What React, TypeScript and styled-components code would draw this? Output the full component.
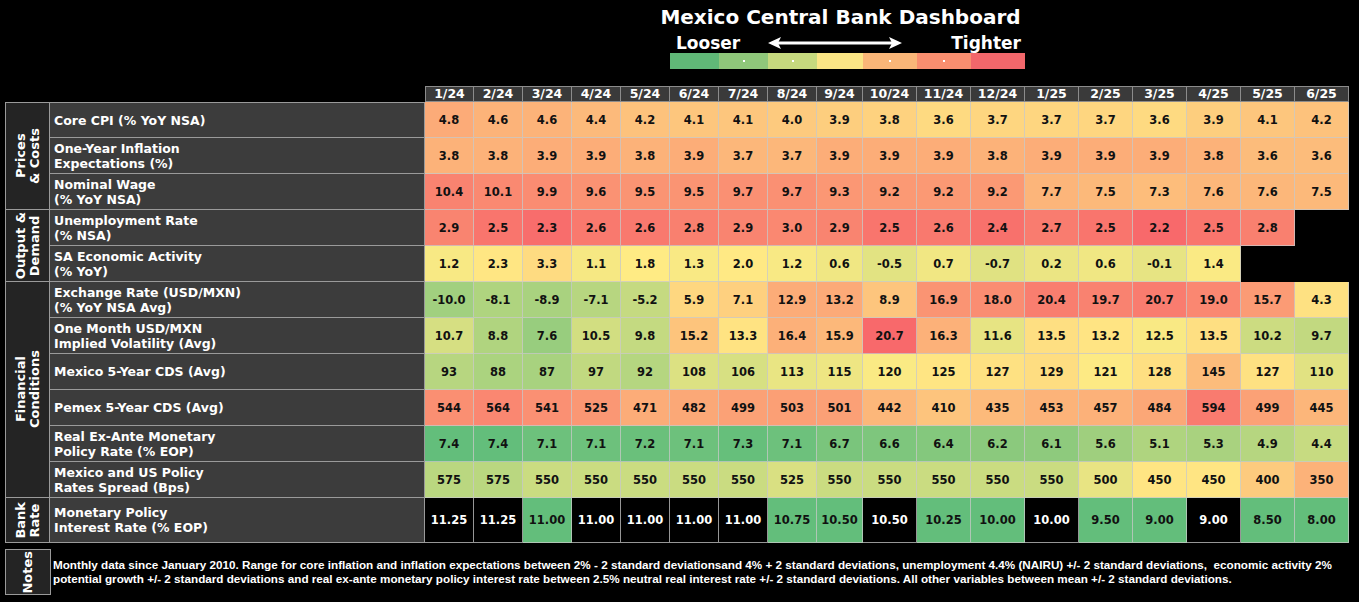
import React from 'react';
import styled, { createGlobalStyle } from 'styled-components';

const GlobalStyle = createGlobalStyle`
  html, body {
    margin: 0;
    padding: 0;
    background: #000;
  }
  body {
    font-family: 'DejaVu Sans', Verdana, sans-serif;
    color: #fff;
  }
`;

const Page = styled.div`
  width: 1359px;
  height: 602px;
  background: #000;
  overflow: hidden;
  display: flex;
  flex-direction: column;
`;

const Header = styled.header`
  margin-left: 660px;
  width: 365px;
  padding-top: 5px;
  display: flex;
  flex-direction: column;
`;

const Title = styled.h1`
  margin: 0;
  padding-right: 4px;
  font-size: 20px;
  line-height: 24px;
  font-weight: bold;
  text-align: center;
  color: #fff;
  white-space: nowrap;
`;

const ScaleRow = styled.div`
  margin-left: 10px;
  height: 24px;
  display: grid;
  grid-template-columns: 6px 92px 134px 1fr;
  align-items: end;
`;

const ScaleWord = styled.span<{ $right?: boolean }>`
  font-size: 17px;
  font-weight: bold;
  line-height: 20px;
  white-space: nowrap;
  grid-column: ${p => (p.$right ? 4 : 2)};
  text-align: ${p => (p.$right ? 'right' : 'left')};
  padding-right: ${p => (p.$right ? '4px' : '0')};
`;

const ArrowBox = styled.div`
  height: 20px;
  display: flex;
  align-items: center;
`;

const Legend = styled.div`
  margin-left: 10px;
  height: 16px;
  display: flex;
`;

const Swatch = styled.div<{ $w: number; $c: string; $dot?: boolean }>`
  width: ${p => p.$w}px;
  background: ${p => p.$c};
  display: flex;
  align-items: center;
  justify-content: center;
  &::after {
    content: '';
    width: 2px;
    height: 2px;
    background: ${p => (p.$dot ? '#fff' : 'transparent')};
  }
`;

const Table = styled.div`
  margin: 17px 0 0 5px;
  display: grid;
  grid-template-columns: 45px 375px repeat(8, 49px) 46px repeat(9, 54px);
  grid-template-rows: 16px repeat(11, 36px) 45px;
`;

const Corner = styled.div`
  grid-column: span 2;
`;

const HeadCell = styled.div<{ $first?: boolean }>`
  box-sizing: border-box;
  background: #3a3a3a;
  border: 1px solid #8c8c8c;
  border-left: ${p => (p.$first ? '1px solid #8c8c8c' : 'none')};
  display: flex;
  align-items: center;
  justify-content: center;
  font-size: 12.5px;
  font-weight: bold;
  line-height: 1;
`;

const GroupCell = styled.div<{ $span: number; $top?: boolean }>`
  grid-row: span ${p => p.$span};
  box-sizing: border-box;
  background: #242424;
  border: 1px solid #9a9a9a;
  border-top: ${p => (p.$top ? '1px solid #9a9a9a' : 'none')};
  display: flex;
  align-items: center;
  justify-content: center;
`;

const GroupText = styled.div`
  writing-mode: vertical-rl;
  transform: rotate(180deg);
  text-align: center;
  font-size: 13px;
  line-height: 14px;
  font-weight: bold;
  white-space: nowrap;
`;

const LabelCell = styled.div<{ $top?: boolean }>`
  box-sizing: border-box;
  background: #3c3c3c;
  border-right: 1px solid #9a9a9a;
  border-bottom: 1px solid #9a9a9a;
  border-top: ${p => (p.$top ? '1px solid #9a9a9a' : 'none')};
  padding-left: 4px;
  display: flex;
  flex-direction: column;
  justify-content: center;
  font-size: 12.5px;
  line-height: 15px;
  font-weight: bold;
  white-space: nowrap;
`;

const ValueCell = styled.div<{ $bg: string; $light?: boolean }>`
  box-sizing: border-box;
  background: ${p => p.$bg};
  border-right: 1px solid rgba(200, 200, 200, 0.75);
  border-bottom: 1px solid rgba(200, 200, 200, 0.75);
  display: flex;
  align-items: center;
  justify-content: center;
  font-size: 11.5px;
  font-weight: bold;
  color: ${p => (p.$light ? '#fff' : '#111')};
`;

const BlankCell = styled.div`
  background: #000;
`;

const Notes = styled.div`
  margin: 6px 0 0 5px;
  display: flex;
  align-items: center;
`;

const NotesTag = styled.div`
  box-sizing: border-box;
  width: 46px;
  height: 46px;
  flex: none;
  background: #242424;
  border: 1px solid #9a9a9a;
  display: flex;
  align-items: center;
  justify-content: center;
`;

const NotesText = styled.p`
  margin: 0 0 0 2px;
  font-family: 'Liberation Sans', Arial, sans-serif;
  font-size: 11.7px;
  line-height: 14px;
  font-weight: bold;
  white-space: nowrap;
`;

const GREEN = [99, 190, 123];
const YELLOW = [255, 235, 132];
const RED = [248, 105, 107];

function scaleColor(t: number) {
  const c = Math.max(0, Math.min(1, t));
  const [a, b, k] = c < 0.5 ? [GREEN, YELLOW, c * 2] : [YELLOW, RED, (c - 0.5) * 2];
  const mix = a.map((v, i) => Math.round(v + (b[i] - v) * k));
  return `rgb(${mix.join(',')})`;
}

const months = [
  '1/24', '2/24', '3/24', '4/24', '5/24', '6/24', '7/24', '8/24', '9/24',
  '10/24', '11/24', '12/24', '1/25', '2/25', '3/25', '4/25', '5/25', '6/25',
];

type Row = {
  label: string[];
  values: (number | null)[];
  green: number; // value shown fully green
  red: number; // value shown fully red
  digits: number;
};

const groups: { name: string[]; rows: Row[] }[] = [
  {
    name: ['Prices', '& Costs'],
    rows: [
      {
        label: ['Core CPI (% YoY NSA)'],
        values: [4.8, 4.6, 4.6, 4.4, 4.2, 4.1, 4.1, 4.0, 3.9, 3.8, 3.6, 3.7, 3.7, 3.7, 3.6, 3.9, 4.1, 4.2],
        green: -0.2, red: 6.5, digits: 1,
      },
      {
        label: ['One-Year Inflation', 'Expectations (%)'],
        values: [3.8, 3.8, 3.9, 3.9, 3.8, 3.9, 3.7, 3.7, 3.9, 3.9, 3.9, 3.8, 3.9, 3.9, 3.9, 3.8, 3.6, 3.6],
        green: 0.2, red: 5.2, digits: 1,
      },
      {
        label: ['Nominal Wage', '(% YoY NSA)'],
        values: [10.4, 10.1, 9.9, 9.6, 9.5, 9.5, 9.7, 9.7, 9.3, 9.2, 9.2, 9.2, 7.7, 7.5, 7.3, 7.6, 7.6, 7.5],
        green: -2.2, red: 11.8, digits: 1,
      },
    ],
  },
  {
    name: ['Output &', 'Demand'],
    rows: [
      {
        label: ['Unemployment Rate', '(% NSA)'],
        values: [2.9, 2.5, 2.3, 2.6, 2.6, 2.8, 2.9, 3.0, 2.9, 2.5, 2.6, 2.4, 2.7, 2.5, 2.2, 2.5, 2.8, null],
        green: 8.9, red: 2.2, digits: 1,
      },
      {
        label: ['SA Economic Activity', '(% YoY)'],
        values: [1.2, 2.3, 3.3, 1.1, 1.8, 1.3, 2.0, 1.2, 0.6, -0.5, 0.7, -0.7, 0.2, 0.6, -0.1, 1.4, null, null],
        green: -10.7, red: 14.3, digits: 1,
      },
    ],
  },
  {
    name: ['Financial', 'Conditions'],
    rows: [
      {
        label: ['Exchange Rate (USD/MXN)', '(% YoY NSA Avg)'],
        values: [-10.0, -8.1, -8.9, -7.1, -5.2, 5.9, 7.1, 12.9, 13.2, 8.9, 16.9, 18.0, 20.4, 19.7, 20.7, 19.0, 15.7, 4.3],
        green: -18.4, red: 23.8, digits: 1,
      },
      {
        label: ['One Month USD/MXN', 'Implied Volatility (Avg)'],
        values: [10.7, 8.8, 7.6, 10.5, 9.8, 15.2, 13.3, 16.4, 15.9, 20.7, 16.3, 11.6, 13.5, 13.2, 12.5, 13.5, 10.2, 9.7],
        green: 4.9, red: 20.7, digits: 1,
      },
      {
        label: ['Mexico 5-Year CDS (Avg)'],
        values: [93, 88, 87, 97, 92, 108, 106, 113, 115, 120, 125, 127, 129, 121, 128, 145, 127, 110],
        green: 59, red: 185, digits: 0,
      },
      {
        label: ['Pemex 5-Year CDS (Avg)'],
        values: [544, 564, 541, 525, 471, 482, 499, 503, 501, 442, 410, 435, 453, 457, 484, 594, 499, 445],
        green: -17, red: 640, digits: 0,
      },
      {
        label: ['Real Ex-Ante Monetary', 'Policy Rate (% EOP)'],
        values: [7.4, 7.4, 7.1, 7.1, 7.2, 7.1, 7.3, 7.1, 6.7, 6.6, 6.4, 6.2, 6.1, 5.6, 5.1, 5.3, 4.9, 4.4],
        green: 7.4, red: -2.0, digits: 1,
      },
      {
        label: ['Mexico and US Policy', 'Rates Spread (Bps)'],
        values: [575, 575, 550, 550, 550, 550, 550, 525, 550, 550, 550, 550, 550, 500, 450, 450, 400, 350],
        green: 718, red: 207, digits: 0,
      },
    ],
  },
];

const policyRate = [11.25, 11.25, 11.0, 11.0, 11.0, 11.0, 11.0, 10.75, 10.5, 10.5, 10.25, 10.0, 10.0, 9.5, 9.0, 9.0, 8.5, 8.0];

const legend = [
  { w: 49, c: '#60b877' },
  { w: 49, c: '#8fc77a', dot: true },
  { w: 49, c: '#c6d97e', dot: true },
  { w: 46, c: '#fbe585' },
  { w: 54, c: '#fab678', dot: true },
  { w: 54, c: '#f98e6f', dot: true },
  { w: 54, c: '#f2676b' },
];

function Arrow() {
  return (
    <svg width="134" height="14" viewBox="0 0 134 14">
      <line x1="8" y1="7" x2="126" y2="7" stroke="#fff" strokeWidth="3" />
      <polygon points="0,7 13,1 10,7 13,13" fill="#fff" />
      <polygon points="134,7 121,1 124,7 121,13" fill="#fff" />
    </svg>
  );
}

export default function App() {
  let rowIndex = 0;
  return (
    <Page>
      <GlobalStyle />
      <Header>
        <Title>Mexico Central Bank Dashboard</Title>
        <ScaleRow>
          <ScaleWord>Looser</ScaleWord>
          <ArrowBox>
            <Arrow />
          </ArrowBox>
          <ScaleWord $right>Tighter</ScaleWord>
        </ScaleRow>
        <Legend>
          {legend.map((s, i) => (
            <Swatch key={i} $w={s.w} $c={s.c} $dot={s.dot} />
          ))}
        </Legend>
      </Header>

      <Table>
        <Corner />
        {months.map((m, i) => (
          <HeadCell key={m} $first={i === 0}>{m}</HeadCell>
        ))}

        {groups.map((g, gi) =>
          g.rows.map((r, ri) => {
            const top = rowIndex++ === 0;
            return (
              <React.Fragment key={r.label.join()}>
                {ri === 0 && (
                  <GroupCell $span={g.rows.length} $top={gi === 0}>
                    <GroupText>
                      {g.name.map(n => <div key={n}>{n}</div>)}
                    </GroupText>
                  </GroupCell>
                )}
                <LabelCell $top={top}>
                  {r.label.map(l => <span key={l}>{l}</span>)}
                </LabelCell>
                {r.values.map((v, i) =>
                  v === null ? (
                    <BlankCell key={i} />
                  ) : (
                    <ValueCell key={i} $bg={scaleColor((v - r.green) / (r.red - r.green))}>
                      {v.toFixed(r.digits)}
                    </ValueCell>
                  ),
                )}
              </React.Fragment>
            );
          }),
        )}

        <GroupCell $span={1}>
          <GroupText>
            <div>Bank</div>
            <div>Rate</div>
          </GroupText>
        </GroupCell>
        <LabelCell>
          <span>Monetary Policy</span>
          <span>Interest Rate (% EOP)</span>
        </LabelCell>
        {policyRate.map((v, i) => {
          const changed = i > 0 && v !== policyRate[i - 1];
          return (
            <ValueCell key={i} $bg={changed ? '#63be7b' : '#000'} $light={!changed}>
              {v.toFixed(2)}
            </ValueCell>
          );
        })}
      </Table>

      <Notes>
        <NotesTag>
          <GroupText>Notes</GroupText>
        </NotesTag>
        <NotesText>
          Monthly data since January 2010. Range for core inflation and inflation expectations between 2% - 2 standard
          deviationsand 4% + 2 standard deviations, unemployment 4.4% (NAIRU) +/- 2 standard deviations,&nbsp; economic
          activity 2%
          <br />
          potential growth +/- 2 standard deviations and real ex-ante monetary policy interest rate between 2.5% neutral
          real interest rate +/- 2 standard deviations. All other variables between mean +/- 2 standard deviations.
        </NotesText>
      </Notes>
    </Page>
  );
}
